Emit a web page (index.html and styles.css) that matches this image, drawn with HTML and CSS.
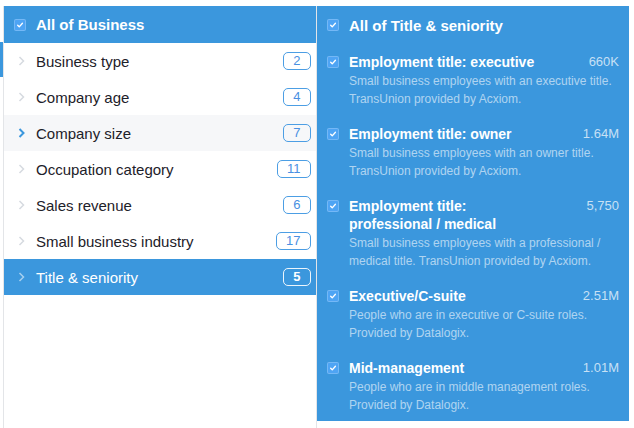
FILE: index.html
```html
<!DOCTYPE html>
<html>
<head>
<meta charset="utf-8">
<link rel="stylesheet" href="styles.css">
</head>
<body>
<div class="page">
  <div class="edge"><div class="edge-mark"></div></div>
  <div class="left">
    <div class="lhead">
      <span class="cb"><svg viewBox="0 0 12 12"><path d="M3.2 6.3 L5.1 8.2 L8.9 3.9" /></svg></span>
      <span class="lhead-text">All of Business</span>
    </div>
    <div class="row">
      <svg class="chev" viewBox="0 0 7 10"><path d="M1.5 1 L5.5 5 L1.5 9" /></svg>
      <span class="label">Business type</span><span class="badge">2</span>
    </div>
    <div class="row">
      <svg class="chev" viewBox="0 0 7 10"><path d="M1.5 1 L5.5 5 L1.5 9" /></svg>
      <span class="label">Company age</span><span class="badge">4</span>
    </div>
    <div class="row hover">
      <svg class="chev" viewBox="0 0 7 10"><path d="M1.5 1 L5.5 5 L1.5 9" /></svg>
      <span class="label">Company size</span><span class="badge">7</span>
    </div>
    <div class="row">
      <svg class="chev" viewBox="0 0 7 10"><path d="M1.5 1 L5.5 5 L1.5 9" /></svg>
      <span class="label">Occupation category</span><span class="badge">11</span>
    </div>
    <div class="row">
      <svg class="chev" viewBox="0 0 7 10"><path d="M1.5 1 L5.5 5 L1.5 9" /></svg>
      <span class="label">Sales revenue</span><span class="badge">6</span>
    </div>
    <div class="row">
      <svg class="chev" viewBox="0 0 7 10"><path d="M1.5 1 L5.5 5 L1.5 9" /></svg>
      <span class="label">Small business industry</span><span class="badge">17</span>
    </div>
    <div class="row selected">
      <svg class="chev" viewBox="0 0 7 10"><path d="M1.5 1 L5.5 5 L1.5 9" /></svg>
      <span class="label">Title &amp; seniority</span><span class="badge">5</span>
    </div>
  </div>
  <div class="right">
    <div class="rhead">
      <span class="cb"><svg viewBox="0 0 12 12"><path d="M3.2 6.3 L5.1 8.2 L8.9 3.9" /></svg></span>
      <span class="rhead-text">All of Title &amp; seniority</span>
    </div>
    <div class="item">
      <span class="cb"><svg viewBox="0 0 12 12"><path d="M3.2 6.3 L5.1 8.2 L8.9 3.9" /></svg></span>
      <div class="ibody">
        <div class="ititle"><span class="name">Employment title: executive</span><span class="count">660K</span></div>
        <div class="desc">Small business employees with an executive title. TransUnion provided by Acxiom.</div>
      </div>
    </div>
    <div class="item">
      <span class="cb"><svg viewBox="0 0 12 12"><path d="M3.2 6.3 L5.1 8.2 L8.9 3.9" /></svg></span>
      <div class="ibody">
        <div class="ititle"><span class="name">Employment title: owner</span><span class="count">1.64M</span></div>
        <div class="desc">Small business employees with an owner title. TransUnion provided by Acxiom.</div>
      </div>
    </div>
    <div class="item">
      <span class="cb"><svg viewBox="0 0 12 12"><path d="M3.2 6.3 L5.1 8.2 L8.9 3.9" /></svg></span>
      <div class="ibody">
        <div class="ititle"><span class="name">Employment title: professional / medical</span><span class="count">5,750</span></div>
        <div class="desc">Small business employees with a professional / medical title. TransUnion provided by Acxiom.</div>
      </div>
    </div>
    <div class="item">
      <span class="cb"><svg viewBox="0 0 12 12"><path d="M3.2 6.3 L5.1 8.2 L8.9 3.9" /></svg></span>
      <div class="ibody">
        <div class="ititle"><span class="name">Executive/C-suite</span><span class="count">2.51M</span></div>
        <div class="desc">People who are in executive or C-suite roles. Provided by Datalogix.</div>
      </div>
    </div>
    <div class="item">
      <span class="cb"><svg viewBox="0 0 12 12"><path d="M3.2 6.3 L5.1 8.2 L8.9 3.9" /></svg></span>
      <div class="ibody">
        <div class="ititle"><span class="name">Mid-management</span><span class="count">1.01M</span></div>
        <div class="desc">People who are in middle management roles. Provided by Datalogix.</div>
      </div>
    </div>
  </div>
</div>
</body>
</html>
```

FILE: styles.css
```css
* { box-sizing: border-box; }
html, body { margin: 0; padding: 0; background: #fff; }
body {
  font-family: "Liberation Sans", Arial, Helvetica, sans-serif;
  overflow: hidden;
  width: 634px;
  height: 428px;
}
.page {
  display: flex;
  align-items: stretch;
  padding-top: 6px;
  height: 428px;
}
.edge { width: 3px; flex-shrink: 0; }
.edge-mark { margin-top: 36px; height: 35px; background: #3b97dd; }

.left {
  width: 314px;
  flex-shrink: 0;
  border-left: 1px solid #e3e5e8;
  border-right: 1px solid #e3e5e8;
  background: #fff;
}
.lhead {
  height: 37px;
  background: #3b97dd;
  display: flex;
  align-items: center;
  padding-left: 10px;
  gap: 10px;
  color: #fff;
  font-weight: bold;
  font-size: 15px;
}
.cb {
  width: 12px;
  height: 12px;
  flex-shrink: 0;
  border-radius: 2px;
  background: #4ea4f4;
  border: 1px solid rgba(255,255,255,0.22);
  display: flex;
}
.cb svg { width: 10px; height: 10px; }
.cb path { fill: none; stroke: #fff; stroke-width: 1.6; stroke-linecap: round; stroke-linejoin: round; }

.row {
  height: 36px;
  display: flex;
  align-items: center;
  padding-left: 14px;
  padding-right: 5px;
  font-size: 15px;
  color: #1d2129;
}
.chev { width: 7px; height: 10px; flex-shrink: 0; margin-right: 11px; }
.chev path { fill: none; stroke: #d6dae0; stroke-width: 1.5; }
.row .label { flex: 1; }
.badge {
  height: 18px;
  line-height: 16px;
  padding: 0 9.5px;
  border: 1px solid #4c9ee4;
  border-radius: 5px;
  color: #4a90e2;
  font-size: 13px;
}
.row.hover { background: #f6f7f9; }
.row.hover .chev path { stroke: #3b97dd; stroke-width: 2; }
.row.selected { background: #3b97dd; color: #fff; }
.row.selected .chev path { stroke: rgba(255,255,255,0.55); }
.row.selected .badge { border: 1.5px solid rgba(255,255,255,0.9); color: #fff; font-weight: bold; line-height: 15px; }

.right {
  width: 312px;
  height: 415px;
  flex-shrink: 0;
  align-self: flex-start;
  background: #3b97dd;
  color: #fff;
}
.rhead {
  height: 38px;
  display: flex;
  align-items: center;
  padding-left: 10px;
  gap: 10px;
  font-size: 15px;
  font-weight: bold;
}
.item {
  display: flex;
  gap: 10px;
  padding: 9px 10px 8px 10px;
}
.item .cb { margin-top: 3px; }
.ibody { flex: 1; }
.ititle { display: flex; }
.name { flex: 1; font-size: 14px; font-weight: bold; line-height: 18px; }
.count {
  width: 80px;
  text-align: right;
  font-size: 13px;
  line-height: 18px;
  color: rgba(255,255,255,0.72);
}
.desc {
  margin-top: 1px;
  font-size: 12px;
  line-height: 18px;
  color: rgba(255,255,255,0.6);
}
```
